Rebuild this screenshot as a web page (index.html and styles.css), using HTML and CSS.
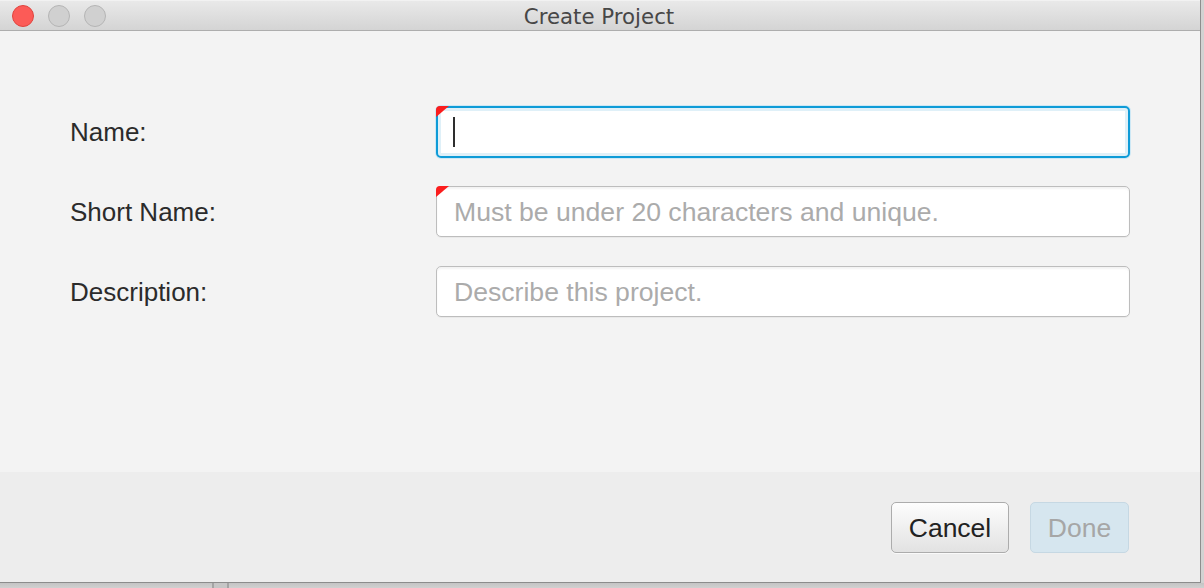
FILE: index.html
```html
<!DOCTYPE html>
<html lang="en">
<head>
<meta charset="utf-8">
<title>Create Project</title>
<link rel="stylesheet" href="styles.css">
</head>
<body>
<div class="screen">
  <div class="window">
    <div class="titlebar">
      <div class="lights">
        <span class="light close"></span>
        <span class="light"></span>
        <span class="light"></span>
      </div>
      <div class="title">Create Project</div>
    </div>
    <div class="main">
      <form class="form">
        <label class="label" for="f-name">Name:</label>
        <div class="field-wrap">
          <div class="field focused" id="f-name"></div>
          <span class="caret"></span>
          <span class="required"></span>
        </div>
        <label class="label" for="f-short">Short Name:</label>
        <div class="field-wrap">
          <div class="field" id="f-short"><span class="placeholder">Must be under 20 characters and unique.</span></div>
          <span class="required"></span>
        </div>
        <label class="label" for="f-desc">Description:</label>
        <div class="field-wrap">
          <div class="field" id="f-desc"><span class="placeholder">Describe this project.</span></div>
        </div>
      </form>
    </div>
    <div class="footer">
      <button class="btn cancel" type="button">Cancel</button>
      <button class="btn done" type="button" disabled>Done</button>
    </div>
  </div>
  <div class="side"></div>
</div>
<div class="below">
  <span class="bar"></span>
  <span class="gap"></span>
  <span class="bar"></span>
</div>
</body>
</html>
```
FILE: styles.css
```css
html, body {
  margin: 0;
  padding: 0;
}
body {
  width: 1204px;
  height: 588px;
  overflow: hidden;
  background: #cdcdcd;
  font-family: "Liberation Sans", Arial, sans-serif;
}
.screen {
  display: flex;
  height: 583px;
}
.window {
  width: 1200px;
  height: 582px;
  border-right: 1px solid #8e8e8e;
  border-bottom: 1px solid #8c8c8c;
  display: flex;
  flex-direction: column;
  background: #f3f3f3;
}
.side {
  flex: 1;
  background: #d2d2d2;
}
.titlebar {
  border-top: 1px solid #f2f2f2;
  border-bottom: 1px solid #adadad;
  box-sizing: content-box;
  height: 29px;
  background: linear-gradient(#e9e9e9, #d4d4d4);
  display: flex;
  align-items: center;
  position: relative;
}
.lights {
  display: flex;
  gap: 14px;
  padding-left: 12px;
  padding-top: 1px;
}
.light {
  width: 20px;
  height: 20px;
  border-radius: 50%;
  background: #d0d0d0;
  border: 1px solid #b5b5b5;
}
.light.close {
  background: #fc5b57;
  border-color: #e0443e;
}
.title {
  position: absolute;
  left: 0;
  right: 0;
  top: 3px;
  text-align: center;
  font-family: "DejaVu Sans", sans-serif;
  font-size: 21.3px;
  color: #474747;
  padding-right: 2px;
}
.main {
  height: 441px;
  box-sizing: border-box;
  padding: 75px 0 0 70px;
}
.form {
  display: grid;
  grid-template-columns: 366px 694px;
  grid-auto-rows: 52px;
  row-gap: 28px;
  margin: 0;
}
.label {
  display: flex;
  align-items: center;
  font-size: 26px;
  color: #2b2b2b;
  padding-top: 1px;
}
.field-wrap {
  position: relative;
}
.field {
  box-sizing: border-box;
  height: 51px;
  width: 694px;
  background: #fff;
  border: 1px solid #bdbdbd;
  border-radius: 5px;
  box-shadow: inset 0 2px 2px rgba(0, 0, 0, 0.05), 0 1px 0 rgba(0, 0, 0, 0.04);
  display: flex;
  align-items: center;
  padding-left: 17px;
  padding-top: 1px;
}
.field.focused {
  height: 52px;
  border: 2px solid #0e9bd7;
  border-radius: 5px;
  box-shadow: inset 0 0 0 3px #dff0f8, 0 0 0 1px #cde8f5;
}
.placeholder {
  font-size: 26.6px;
  color: #ababab;
}
.caret {
  position: absolute;
  left: 17px;
  top: 11px;
  width: 2px;
  height: 30px;
  background: #2e2e2e;
}
.required {
  position: absolute;
  left: 0;
  top: 0;
  width: 0;
  height: 0;
  border-top: 11px solid #fb1d1d;
  border-right: 13px solid transparent;
  border-top-left-radius: 4px;
}
.footer {
  height: 110px;
  background: #ededed;
  display: flex;
  justify-content: flex-end;
  align-items: flex-start;
  gap: 21px;
  padding: 30px 71px 0 0;
  box-sizing: border-box;
}
.btn {
  height: 51px;
  font-family: "Liberation Sans", Arial, sans-serif;
  font-size: 26.5px;
  border-radius: 5px;
  padding: 0;
  margin: 0;
  padding-top: 1px;
}
.cancel {
  width: 118px;
  color: #222;
  border: 1px solid #acacac;
  background: linear-gradient(#fdfdfd, #e2e2e2);
  box-shadow: 0 1px 0 rgba(255, 255, 255, 0.7);
}
.done {
  width: 99px;
  color: #a6a6a6;
  border: 1px solid #c6d8e3;
  background: #d6e6ef;
}
.below {
  display: flex;
  height: 5px;
  background: linear-gradient(#c4c4c4, #d0d0d0);
  padding-left: 212px;
}
.bar {
  width: 2px;
  background: #a4a4a4;
}
.gap {
  width: 13px;
  background: #c6c6c6;
}
```
